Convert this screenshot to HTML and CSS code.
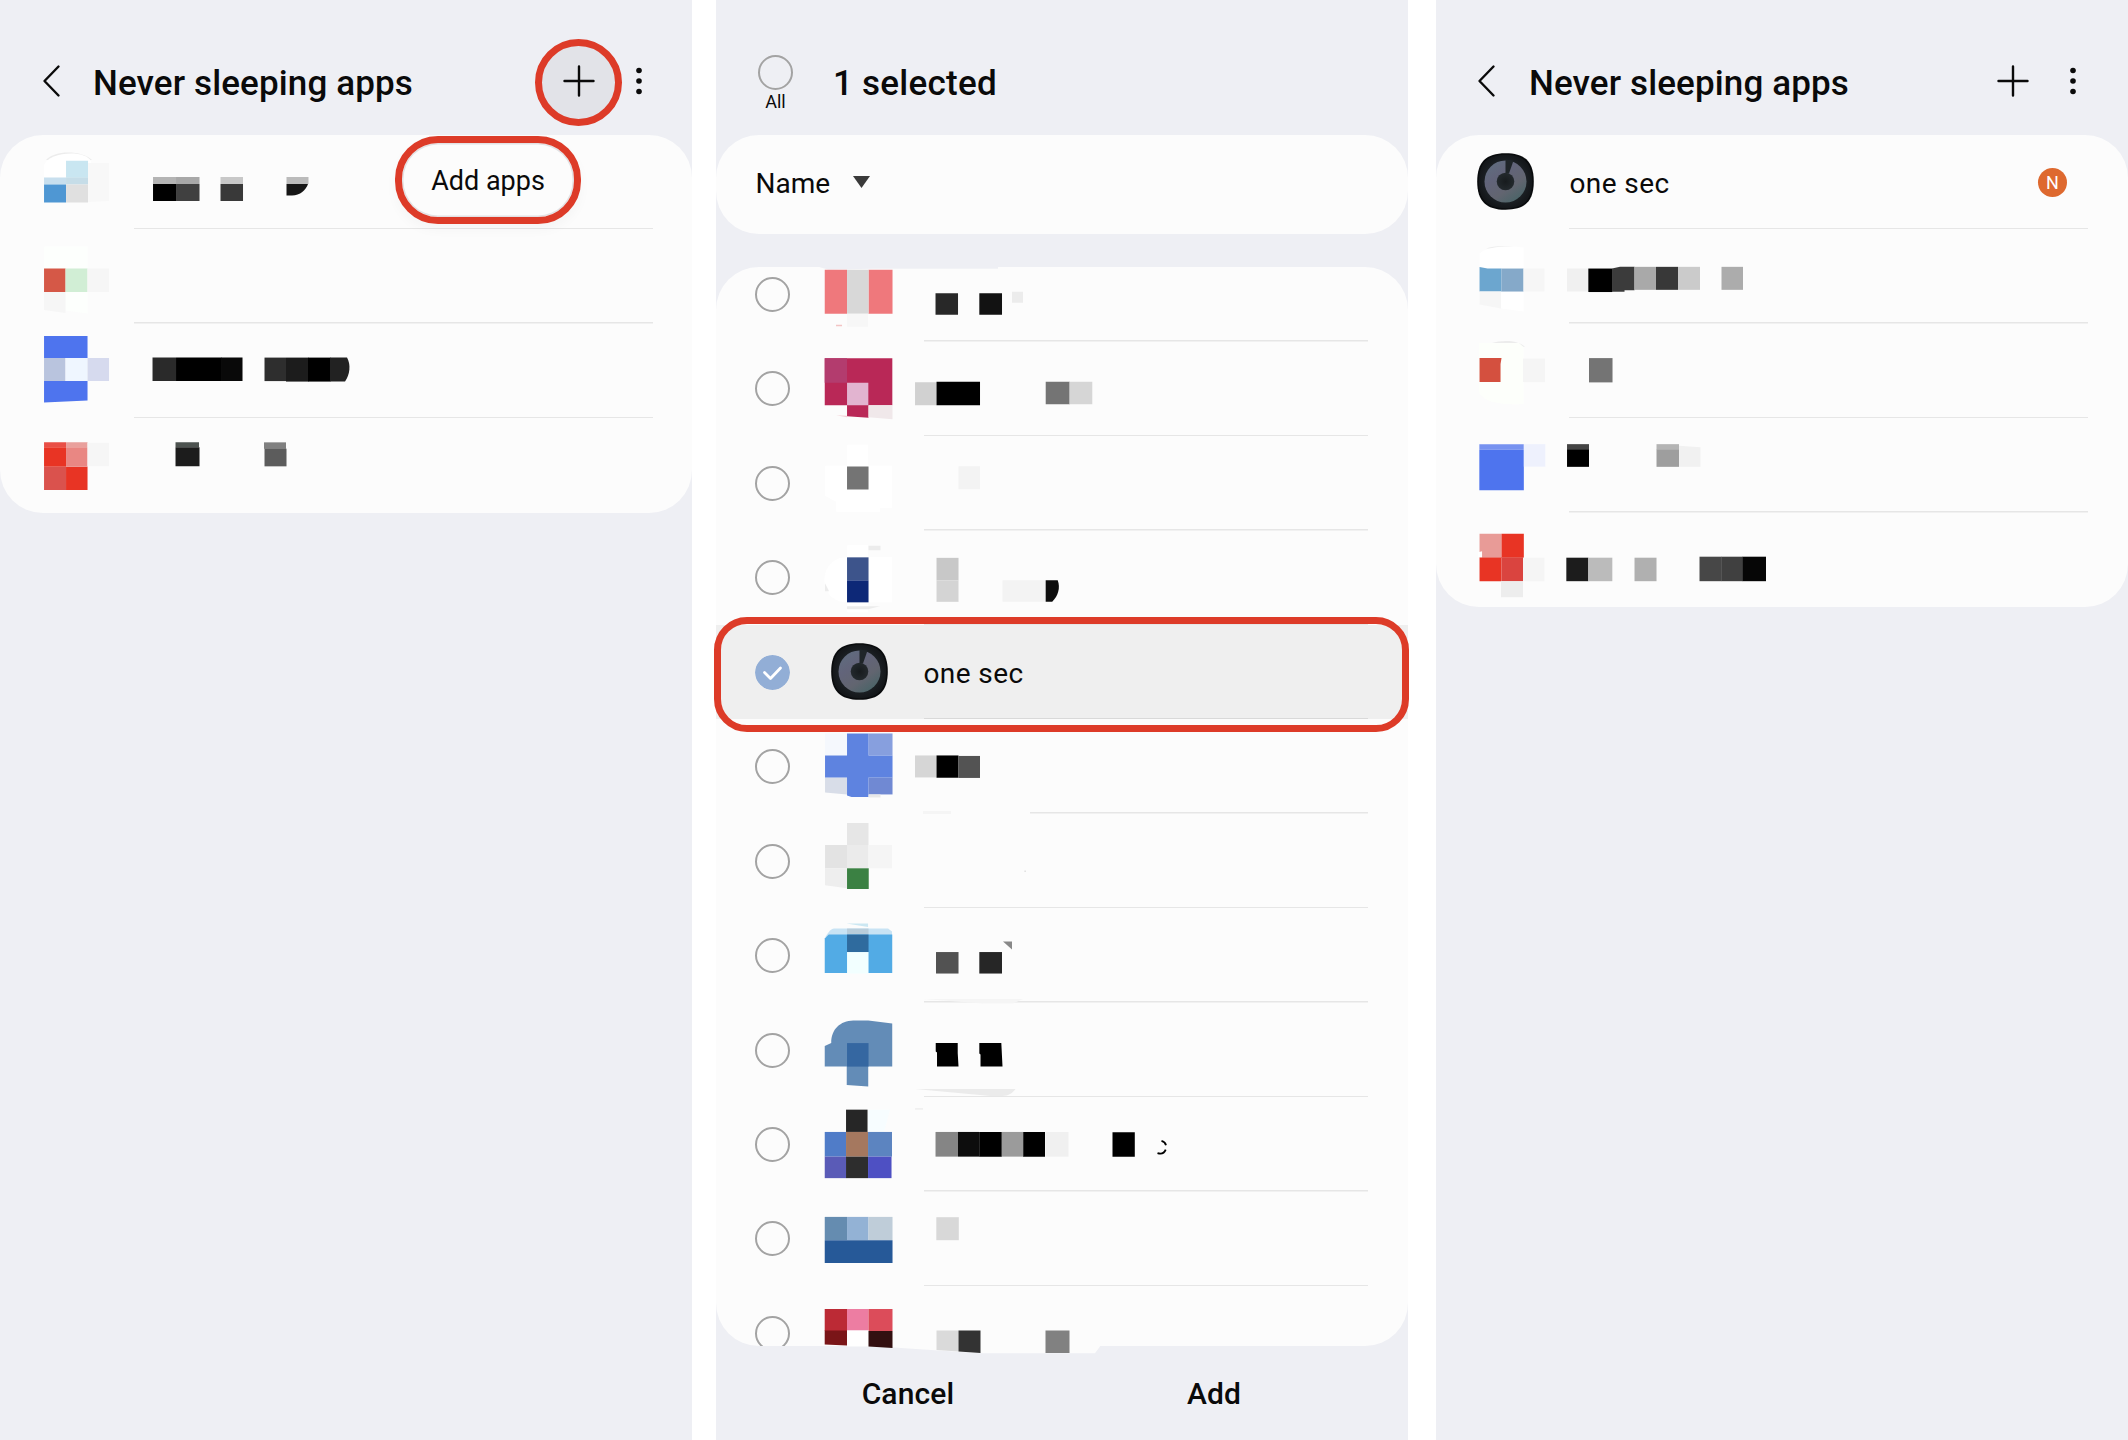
FILE: index.html
```html
<!DOCTYPE html>
<html lang="en">
<head>
<meta charset="utf-8">
<title>Never sleeping apps</title>
<link rel="stylesheet" href="styles.css">
</head>
<body>
<svg width="0" height="0" class="defs" aria-hidden="true">
  <defs>
    <linearGradient id="dial" x1="0" y1="0" x2=".7" y2="1">
      <stop offset="0" stop-color="#5f6f80"/><stop offset=".4" stop-color="#62647a"/><stop offset=".72" stop-color="#626570"/><stop offset="1" stop-color="#4b6468"/>
    </linearGradient>
    <radialGradient id="hub"><stop offset="0" stop-color="#171b1e"/><stop offset="1" stop-color="#23292d"/></radialGradient>
    <radialGradient id="body"><stop offset=".6" stop-color="#20262b"/><stop offset="1" stop-color="#14171a"/></radialGradient>
    <symbol id="onesec" viewBox="0 0 57 57">
      <path d="M28.5 .2C48 .2 56.8 9 56.8 28.5S48 56.8 28.5 56.8.2 48 .2 28.5 9 .2 28.5 .2z" fill="#090b0d"/>
      <path d="M28.5 1.8C46.5 1.8 55.2 10.5 55.2 28.5S46.5 55.2 28.5 55.2 1.8 46.5 1.8 28.5 10.5 1.8 28.5 1.8z" fill="url(#body)"/>
      <circle cx="28.5" cy="28.5" r="21" fill="url(#dial)"/>
      <path d="M28.5 6.500L36.500 7.500 32 20.500 28.500 21z" fill="#1f2529"/>
      <circle cx="28.5" cy="28.5" r="8.800" fill="url(#hub)"/>
    </symbol>
    <symbol id="back" viewBox="0 0 20 34"><path d="M17.5 2.5L3.5 17l14 14.5" fill="none" stroke="#0a0a0a" stroke-width="2.4" stroke-linecap="round" stroke-linejoin="round"/></symbol>
    <symbol id="plus" viewBox="0 0 32 32"><path d="M16 1.5v29M1.5 16h29" stroke="#0a0a0a" stroke-width="2.4" stroke-linecap="round"/></symbol>
    <symbol id="more" viewBox="0 0 8 30"><g fill="#0a0a0a"><circle cx="4" cy="4.5" r="2.8"/><circle cx="4" cy="15" r="2.8"/><circle cx="4" cy="25.5" r="2.8"/></g></symbol>
  </defs>
</svg>
<main class="board">

<section class="panel">
  <header class="bar">
    <svg class="back"><use href="#back"/></svg>
    <h1>Never sleeping apps</h1>
    <span class="add ringed"><svg><use href="#plus"/></svg></span>
    <svg class="more"><use href="#more"/></svg>
  </header>
  <div class="card">
    <div class="row"><svg class="art" viewBox="0 135 692 94.45">
      <path fill="#ececec" d="M46 160c8-10 36-10 46 0z"/><path fill="#fff" d="M44 177.500v-12c4-14 42-16 47-4l-3 16z"/>
      <path fill="#c9e6f1" d="M66 160.700h22v17h-22z"/><path fill="#c8dfee" d="M44 177.500h22v7h-22z"/><path fill="#c6dde8" d="M66 177.500h22v7h-22z"/>
      <path fill="#4f97d3" d="M44 184.500h22v18h-22z"/><path fill="#e0e0e0" d="M66 184.500h22v18h-22z"/><path fill="#f8f8f8" d="M88 163h21v38l-21 1z"/>
      <path fill="#b4b4b4" d="M153 177h23v7h-23z"/><path fill="#a8a8a8" d="M176 177h23.500v7h-23.500z"/><path d="M153 184h23v17h-23z"/><path fill="#404040" d="M176 184h23.500v17h-23.500z"/>
      <path fill="#c8c8c8" d="M220.500 177h22.500v7h-22.500z"/><path fill="#393939" d="M220.500 184h22.500v17h-22.500z"/>
      <path fill="#bbb" d="M286.500 177h22v7h-22z"/><path fill="#161616" d="M286.500 184h21.500c-2 6-8 11.500-16 11.500h-5.500z"/>
    </svg></div>
    <div class="row"><svg class="art" viewBox="0 229.45 692 94.45">
      <path fill="#fdfffd" d="M44 247h43.500v67l-22-3-21.500-8z"/><path fill="#d55847" d="M44 269h21.500v23.500h-21.500z"/><path fill="#d1eed5" d="M65.500 269h22v23.500h-22z"/>
      <path fill="#f6f6f6" d="M87.500 269h21.500v23.500h-21.500zM44 292.500h21.500v21l-21.500-3z"/>
    </svg></div>
    <div class="row"><svg class="art" viewBox="0 323.900 692 94.45">
      <path fill="#4e74ee" d="M44 336h43.500v22h-43.500zM44 381h43.500v19.500l-43.500 2z"/><path fill="#b9c4de" d="M44 358h21.500v23h-21.500z"/><path fill="#eff6ff" d="M65.500 358h22v23h-22z"/><path fill="#d6daee" d="M87.500 358h21.500v23h-21.500z"/>
      <path fill="#2a2a2a" d="M152.500 357.500h23.500v23.500h-23.500z"/><path d="M176 357.500h45.500v23.500h-45.500z"/><path fill="#090909" d="M221 357.500h21.500v23.500h-21.500z"/>
      <path fill="#2e2e2e" d="M264.500 357.500h21.500v23.500h-21.500z"/><path fill="#1c1c1c" d="M286 357.500h22.500v24h-22.500z"/><path d="M308 357.500h22.500v24h-22.500z"/><path fill="#222" d="M330 357.500h17c4 7 3 17-2 24h-15z"/>
    </svg></div>
    <div class="row last"><svg class="art" viewBox="0 418.350 692 94.45">
      <path fill="#e94f46" d="M44 442.700h22v5h-22z"/><path fill="#e9a09c" d="M66 442.700h21.500v5h-21.500z"/><path fill="#e83424" d="M44 447.500h22v19.500h-22zM66 467h21.500v23.300h-21.500z"/><path fill="#e98783" d="M66 447.500h21.500v19.500h-21.500z"/><path fill="#da524d" d="M44 467h22v23.300h-22z"/><path fill="#f6f6f6" d="M87.500 443h21.500v23.500h-21.500z"/>
      <path fill="#4d5350" d="M175.500 442.700h23.500v5h-23.500z"/><path fill="#1c1c1c" d="M175.500 447.500h24v19.200h-24z"/><path fill="#808080" d="M264 442.700h22v6.500h-22z"/><path fill="#5c5c5c" d="M264.500 449h22v17.700h-22z"/>
    </svg></div>
  </div>
  <div class="popup">Add apps</div>
</section>

<section class="panel middle">
  <header class="bar select">
    <div class="all"><i class="dot"></i><span>All</span></div>
    <h1>1 selected</h1>
  </header>
  <div class="card sort"><span>Name</span><svg class="caret" viewBox="0 0 17 12"><path fill="#3a3a3a" d="M0 0h17L8.500 12z"/></svg></div>
  <div class="card list">
    <div class="row pick"><i class="dot"></i><svg class="art" viewBox="806 247.300 602 94.45">
      <path fill="#eeeff4" d="M818 267h180v2h-125l-45 .8z"/>
      <path fill="#ef787c" d="M824.700 270h22.300v44h-22.300zM868.500 270h24v44h-24z"/><path fill="#f3c4c4" d="M836 325h6v1.500h-6z"/><path fill="#d8d8d8" d="M847 270h21.500v44h-21.500z"/><path fill="#f7f7f7" d="M847 314h21v13h-21z"/>
      <path fill="#282828" d="M935.500 293.500h22.500v21.500h-22.500z"/><path fill="#121212" d="M979.300 293.500h22.700v21.500h-22.700z"/><path fill="#ececec" d="M1012 292h11v11h-11z"/>
    </svg></div>
    <div class="row pick"><i class="dot"></i><svg class="art" viewBox="806 341.750 602 94.45">
      <path fill="#b92857" d="M824.700 358h67.600v47h-67.600zM847 404.500h21.500v13l-21.500-1.500z"/><path fill="#b33c6e" d="M824.700 358h22.300v24.500h-22.300z"/><path fill="#e2b4d0" d="M847 382.500h21.300v22.500h-21.300z"/><path fill="#f0e8ea" d="M868.500 405h24v14l-24-2z"/><path fill="#f3cfd6" d="M836 415l11 .5v1.500z"/>
      <path fill="#d1d1d1" d="M915 382h21.500v23h-21.500z"/><path d="M936.500 381.500h43.500v23.500h-43.500z"/><path fill="#747474" d="M1045.700 381.500h24v22.500h-24z"/><path fill="#d6d6d6" d="M1069.500 381.500h22.800v22.500h-22.800z"/>
    </svg></div>
    <div class="row pick"><i class="dot"></i><svg class="art" viewBox="806 436.200 602 94.45">
      <path fill="#fff" d="M847 445h21v21h24v42h-12v4h-44v-10l-11-6v-30h22z"/><path fill="#747474" d="M847 466.700h21.500v23h-21.500z"/><path fill="#f3f3f3" d="M958.500 466.500h21.500v23h-21.500z"/>
    </svg></div>
    <div class="row pick"><i class="dot"></i><svg class="art" viewBox="806 530.650 602 94.45">
      <path fill="#fff" d="M847 545h21v12h24v45h-24v10h-21v-10c-30 0-30-45 0-45z"/><path fill="#ececec" d="M868.500 545.500h12v4.500h-12zM847 606h33l-12 3h-21zM825 583l4 8h-4z"/>
      <path fill="#3d548b" d="M847 557h21.500v23h-21.500z"/><path fill="#0d2877" d="M847 580h21.500v22h-21.500z"/>
      <path fill="#c8c8c8" d="M936.500 557.500h22v22.500h-22z"/><path fill="#d4d4d4" d="M936.500 580h22v21.500h-22z"/><path fill="#f3f3f3" d="M1002.500 580h43.500v21.500h-43.500z"/><path fill="#0d0d0d" d="M1045.700 580h12c3 8 0 16-5.500 21.500h-6.500z"/>
    </svg></div>
    <div class="row pick chosen"><svg class="dot on" viewBox="0 0 35 35"><circle cx="17.500" cy="17.500" r="17.500" fill="#92aed6"/><path d="M9.500 17.500l6 6 10-10.500" fill="none" stroke="#fff" stroke-width="2.800" stroke-linecap="round" stroke-linejoin="round"/></svg>
      <div class="app"><svg class="logo"><use href="#onesec"/></svg><span>one sec</span></div></div>
    <div class="row pick"><i class="dot"></i><svg class="art" viewBox="806 719.550 602 94.45">
      <path fill="#f5f8fd" d="M825 734h22v22h-22z"/><path fill="#879fde" d="M868.500 734h24v22h-24z"/><path fill="#d8dde8" d="M825 778h22v17l-22-2z"/><path fill="#7089d3" d="M868.500 778h24v17h-24z"/><path fill="#5e83e0" d="M847 734h21.500v22h24v22h-24v19.500h-17l-4.500-1.500v-18h-22v-22h22z"/><path fill="#e8e8e8" d="M868.500 795h12v3h-12z"/>
      <path fill="#d6d6d6" d="M915 756h21.500v22h-21.500z"/><path d="M936.500 756h22v22.300h-22z"/><path fill="#535353" d="M958.500 756.500h21.500v22h-21.500z"/>
      <path fill="#f5f5f5" d="M923 811.500h28v3h-28z"/><path fill="#fcfcfc" d="M951 811.500h79v3h-79z"/>
    </svg></div>
    <div class="row pick"><i class="dot"></i><svg class="art" viewBox="806 814 602 94.45">
      <path fill="#e6e6e6" d="M847 823h21.500v22h-21.500z"/><path fill="#e3e3e3" d="M825 845h22v23.300h-22z"/><path fill="#ebebeb" d="M847 845h21.500v23.300h-21.500z"/><path fill="#f5f5f5" d="M868.500 845h23.500v23.300h-23.500z"/><path fill="#eee" d="M825 868.300h22v20l-22-3z"/><path fill="#3b8143" d="M847 868.300h21.700v20.700h-21.700z"/><path fill="#d8d8d8" d="M1024.500 870.500h1.200v1.500h-1.200z"/>
    </svg></div>
    <div class="row pick"><i class="dot"></i><svg class="art" viewBox="806 908.450 602 94.45">
      <path fill="#c8e3f4" d="M825 938c3-5 6-9 9-9h54l4 3v5z"/><path fill="#cbe7f2" d="M846.500 924h21.500v3.500z"/><path fill="#b8cddb" d="M847 929h21.500v6h-21.500z"/>
      <path fill="#52abe5" d="M824.700 939l4-4h63.500v38.500h-67.500z"/><path fill="#2f6b9e" d="M847 935h21.500v17.500h-21.500z"/><path fill="#f2ffff" d="M847 952.500h21.500v21.500h-21.500z"/>
      <path fill="#525252" d="M936 952.500h22.500v21.500h-22.500z"/><path fill="#262626" d="M979.300 952.500h22.700v21.500h-22.700z"/><path fill="#888" d="M1003 942h9v8z"/><path fill="#f5f5f5" d="M923 999.500h100l-10 4.500h-30z"/>
    </svg></div>
    <div class="row pick"><i class="dot"></i><svg class="art" viewBox="806 1002.900 602 94.45">
      <path fill="#638cb7" d="M824.700 1046l6.500-3c0-14 9-22 22-22.500h15l24 3v43h-24v20l-21.500-1.500v-18.500h-22z"/><path fill="#3567a1" d="M847 1043h21.500v23.500h-21.500z"/>
      <path d="M935.700 1043h22v10l.8 13.500h-21.500v-14l-1.300-1zM979.300 1043h22l1.200 23.500h-22v-12l-1.200-1z"/><path fill="#ebebeb" d="M915 1089h100.500c-3 4-7 7-13 7h-12z"/>
    </svg></div>
    <div class="row pick"><i class="dot"></i><svg class="art" viewBox="806 1097.350 602 94.45">
      <path fill="#eee" d="M915 1108.500h8v1.500h-8z"/><path fill="#262626" d="M846 1110h21.500v22.300h-21.500z"/><path fill="#f7fdff" d="M868 1110h22l-6 22h-16z"/>
      <path fill="#507cc8" d="M824.700 1132.300h21.500v24.700h-21.500z"/><path fill="#a5785f" d="M846 1132.300h22v24.700h-22z"/><path fill="#5c84c0" d="M868 1132.300h24v24.700h-24z"/><path fill="#5a5bb7" d="M824.700 1157h21.500v21.500h-21.500z"/><path fill="#2d2d2d" d="M846 1157h22v21.500h-22z"/><path fill="#4e50c3" d="M868 1157h23.500v21.500h-23.500z"/>
      <path fill="#858585" d="M935.500 1132.300h22.500v24.700h-22.500z"/><path fill="#0d0d0d" d="M958 1132.300h21.500v24.700h-21.500z"/><path d="M979.300 1132.300h22.500v24.700h-22.500zM1023 1132.300h22v24.700h-22zM1112.500 1132.500h22.300v24.500h-22.300z"/><path fill="#9b9b9b" d="M1001.800 1132.300h21.500v24.700h-21.500z"/><path fill="#f0f0f0" d="M1045.500 1132.300h23v24.700h-23z"/>
      <path fill="none" stroke="#000" stroke-width="1.800" d="M1161.500 1141.300q3.500 1 4.500 4.200M1157.500 1153.500q6 2 8.200-3.500"/>
    </svg></div>
    <div class="row pick"><i class="dot"></i><svg class="art" viewBox="806 1191.800 602 94.45">
      <path fill="#658cb0" d="M824.700 1216.700h22.300v23.300h-22.300z"/><path fill="#93b2d5" d="M847 1216.700h21.500v23.300h-21.500z"/><path fill="#bfcdd9" d="M868.500 1216.700h24v23.300h-24z"/><path fill="#265998" d="M824.700 1240h67.800v22.700h-67.800z"/><path fill="#d8d8d8" d="M936.300 1217h22.500v23h-22.500z"/>
    </svg></div>
    <div class="row pick"><i class="dot"></i></div>
  </div>
  <svg class="spill" viewBox="806 1300 300 54">
    <path fill="#fcfcfc" d="M806 1345h50l124 8.300h115l6-8.300z"/>
    <path fill="#bc2a35" d="M824.700 1309h22.300v22h-22.300z"/><path fill="#ed7da2" d="M847 1309h21.500v21.500h-21.500z"/><path fill="#dc4c5a" d="M868.500 1309h24v22h-24z"/><path fill="#7a1518" d="M824.700 1330.500h22.300v15l-22.300-1z"/><path fill="#fff" d="M847 1330.500h21.500v16h-21.500z"/><path fill="#331011" d="M868.500 1331h24v17l-24-1.500z"/>
    <path fill="#dadada" d="M936.500 1330.500h22v21l-22-1.500z"/><path fill="#333" d="M958.500 1330.500h22v22.500l-22-1.500z"/><path fill="#818181" d="M1045.500 1330.500h24v22.500h-24z"/>
  </svg>
  <footer><b>Cancel</b><b>Add</b></footer>
  <div class="highlight"></div>
</section>

<section class="panel after">
  <header class="bar">
    <svg class="back"><use href="#back"/></svg>
    <h1>Never sleeping apps</h1>
    <span class="add"><svg><use href="#plus"/></svg></span>
    <svg class="more"><use href="#more"/></svg>
  </header>
  <div class="card">
    <div class="row"><div class="app first"><svg class="logo"><use href="#onesec"/></svg><span>one sec</span><em class="badge">N</em></div></div>
    <div class="row"><svg class="art" viewBox="1436 229.450 692 94.45">
      <path fill="#ececec" d="M1486 249c8-3.500 26-3.500 34 0z"/><path fill="#fff" d="M1479.500 268v-14c8-8 32-8 44-6v64l-22-3-22-6z"/><path fill="#6ca6cf" d="M1479.500 267.500l8 1.500h14v23h-22z"/><path fill="#85a9c9" d="M1501.500 269h22v23h-22z"/><path fill="#f6f6f6" d="M1523.500 269h21v23h-21zM1479.500 292h21.500v17l-21.500-4z"/>
      <path fill="#f0f0f0" d="M1567 269h21.500v23h-21.500z"/><path d="M1588.300 269h24v23.500h-24z"/><path fill="#3b3b3b" d="M1612 269l8-1.700h14.500v23.500h-10v1.500h-12.500z"/><path fill="#a9a9a9" d="M1634.500 267.300h21.500v23h-21.500z"/><path fill="#383838" d="M1656 267.300h22v23h-22z"/><path fill="#cbcbcb" d="M1678 267.300h22v23h-22z"/><path fill="#acacac" d="M1721.500 267.300h21.500v23h-21.500z"/>
    </svg></div>
    <div class="row"><svg class="art" viewBox="1436 323.900 692 94.45">
      <path fill="#ececec" d="M1492 343c8-3 26-4 33 4z"/><path fill="#fdfffb" d="M1479 343h40l4.500 4v57c-20 1-40-1-44.500-12z"/><path fill="#d4503f" d="M1479.500 358h22l-1 6v18h-21z"/><path fill="#f5f5f5" d="M1523 358.500h22v23.500h-22z"/><path fill="#747474" d="M1589 358h23.500v24.300h-23.500z"/>
    </svg></div>
    <div class="row"><svg class="art" viewBox="1436 418.350 692 94.45">
      <path fill="#7792f0" d="M1479.300 444.500h44.500v5.500h-44.500z"/><path fill="#4e74ee" d="M1479.300 450h44.500v40.500h-44.500z"/><path fill="#eef1fd" d="M1523.800 444.500h21.500v22.500h-21.500z"/>
      <path fill="#444" d="M1567 444.500h22v5.500h-22z"/><path d="M1567 449.700h22v17.500h-22z"/><path fill="#b4b4b4" d="M1656.500 444.500h22.500v5.500h-22.500z"/><path fill="#9e9e9e" d="M1656.500 449.700h22.500v17.500h-22.500z"/><path fill="#f1f1f1" d="M1679 446l21.500 1.500v19.500h-21.500z"/>
    </svg></div>
    <div class="row last"><svg class="art" viewBox="1436 512.800 692 94.45">
      <path fill="#e89b97" d="M1479.500 533.500h22v24h-22z"/><path fill="#e83424" d="M1501.500 533.500h22.300v24h-22.300zM1479.500 557.300h22v23.700h-22z"/><path fill="#da443f" d="M1501.500 557.300h21.500v23.700h-21.500z"/><path fill="#f5f5f5" d="M1523 557.500h21.500v23.500h-21.500z"/><path fill="#ededed" d="M1501 581h22v16h-22z"/><path fill="#fff" d="M1478 552l4-1v6h-4z"/>
      <path fill="#1c1c1c" d="M1566.300 557.500h22v23.500h-22z"/><path fill="#bbb" d="M1588.300 557.500h24v23.500h-24z"/><path fill="#b0b0b0" d="M1634.500 557.500h22v23.500h-22z"/><path fill="#474747" d="M1699.500 556.500h22.300v24.500h-22.300z"/><path fill="#404040" d="M1721.500 556.500h21.300v24.500h-21.300z"/><path fill="#060606" d="M1742.500 556.500h23.500v24.500h-23.500z"/>
    </svg></div>
  </div>
</section>

</main>
</body>
</html>
```

FILE: styles.css
```css
* { box-sizing: border-box; }
body {
  margin: 0;
  background: #fff;
  color: #0a0a0a;
  font-family: Roboto, "Liberation Sans", sans-serif;
  font-size: 28px;
}
.defs { position: absolute; }
svg { display: block; flex: none; }

.board { display: flex; justify-content: space-between; height: 1440px; }
.panel {
  position: relative;
  display: flex;
  flex-direction: column;
  width: 692px;
  height: 1440px;
  background: #eeeff4;
  overflow: hidden;
}
.panel.middle { overflow: visible; margin-right: 4px; }

/* Header */
.bar { display: flex; align-items: center; height: 135px; padding: 28px 49px 0 41px; flex: none; }
.bar h1 { margin: 4px 0 0; font-size: 35px; font-weight: 500; line-height: 40px; letter-spacing: .12px; }
.back { width: 20px; height: 34px; margin: -1px 32px 0 0; }
.add {
  display: flex;
  align-items: center;
  justify-content: center;
  width: 87px;
  height: 87px;
  margin-left: auto;
  border: 7px solid transparent;
  border-radius: 50%;
  position: relative;
  top: 1px;
}
.add svg { width: 32px; height: 32px; margin-top: -3px; }
.add.ringed { background: #e2e3e8; border-color: #dd3b28; }
.more { width: 8px; height: 30px; margin: -1px 0 0 13px; }
.after .bar { padding-left: 40px; padding-right: 51px; }
.after .back { margin-right: 33px; }

.bar.select { padding: 0 0 0 42px; align-items: flex-start; }
.all { width: 35px; margin-top: 55px; font-size: 18px; line-height: 20px; text-align: center; }
.all span { display: block; margin-top: 2px; }
.bar.select h1 { margin: 64px 0 0 40px; letter-spacing: .25px; }

/* Cards and rows */
.card { background: #fcfcfc; border-radius: 43px; overflow: hidden; flex: none; }
.sort { display: flex; align-items: center; height: 98.5px; padding: 0 39px; }
.sort span { margin: -2px 0 0 .5px; }
.caret { width: 17px; height: 12px; margin: -4px 0 0 23px; }
.list { height: 1078.400px; margin-top: 33.800px; }
.list .row:first-child { margin-top: -20px; }
.row {
  height: 94.450px;
  background: linear-gradient(#e6e6e6, #e6e6e6) no-repeat 134px 100% / 519px 1.500px;
}
.after .row { background-position: 133px 100%; }
.row.last, .after .row.last { background: none; }
.row.pick { display: flex; align-items: center; padding-left: 38.500px; background-position: 207.500px 100%; background-size: 444px 1.500px; }
.row.chosen { background-color: #efefef; background-image: linear-gradient(#d9d9d9, #d9d9d9); }
.art { width: 692px; height: 94.450px; overflow: visible; }
.pick .art { width: 602px; margin-left: 16.500px; }
.dot { display: block; width: 35px; height: 35px; border: 2px solid #a3a3a3; border-radius: 50%; flex: none; }
.dot.on { border: 0; }
.app { display: flex; align-items: center; gap: 35.500px; flex: 1; height: 100%; padding-left: 41.500px; }
.app.first { padding: 0 61px 0 41px; }
.app span { margin-top: 2px; letter-spacing: .4px; }
.logo { width: 57px; height: 57px; margin-top: -1px; }
.badge {
  margin-left: auto;
  width: 29px;
  height: 29px;
  border-radius: 50%;
  background: #de692f;
  color: #fff;
  font: normal 400 18px/29px Roboto, sans-serif;
  text-align: center;
}

/* Bottom actions */
footer { display: flex; padding: 29px 41px 0 39px; }
footer b { flex: 1; font-size: 30px; font-weight: 500; line-height: 38px; letter-spacing: .15px; text-align: center; }

/* Layers over the panels */
.popup {
  position: absolute;
  left: 395px;
  top: 136px;
  width: 186px;
  height: 88px;
  border: 7px solid #dd3b28;
  border-radius: 43px;
  background: #fcfcfc;
  box-shadow: inset 0 0 0 1.500px #e2e2e4, 0 6px 12px rgba(0, 0, 0, .03);
  font-size: 27px;
  line-height: 77px;
  text-align: center;
}
.highlight {
  position: absolute;
  left: -2px;
  top: 617px;
  width: 695px;
  height: 115px;
  border: 7px solid #dd3b28;
  border-radius: 33px;
}
.spill { position: absolute; left: 90px; top: 1300px; width: 300px; height: 54px; }
```
